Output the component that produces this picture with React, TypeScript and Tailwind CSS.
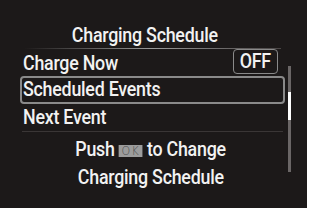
import React from "react";

const font = { fontFamily: '"Roboto", "Liberation Sans", sans-serif' };

function L({ children }: { children: React.ReactNode }) {
  return <span className="inline-block whitespace-nowrap origin-left scale-x-[0.85]">{children}</span>;
}
function C({ children }: { children: React.ReactNode }) {
  return <span className="inline-block whitespace-nowrap origin-center scale-x-[0.85]">{children}</span>;
}

export default function App() {
  return (
    <div className="w-[312px] h-[208px] bg-white flex font-medium" style={font}>
      <div className="w-[307px] h-[208px] bg-[#1c1919] flex text-[#f2f2f2] text-[21px] tracking-[-0.3px]">
        <div className="w-[288px] flex flex-col pl-[20px] pr-[3px] pt-[23px]">
          <div className="h-[25px] leading-[25px] text-center pr-[16px]"><C>Charging Schedule</C></div>
          <div className="h-px bg-gradient-to-r from-transparent via-[#9a9a9a] to-[#4a4646] mx-[4px]" />
          <div className="h-[27px] flex items-center justify-between pl-[3px] pr-[7px]">
            <span className="leading-[26px]"><L>Charge Now</L></span>
            <span className="h-[25px] w-[45px] border border-[#8a8a8a] rounded-[4px] flex items-center justify-center leading-none self-start"><C>OFF</C></span>
          </div>
          <div className="h-[28px] border-2 border-[#8a8a8a] rounded-[4px] flex items-center pl-[1px]"><L>Scheduled Events</L></div>
          <div className="h-[27px] flex items-center pl-[3px]"><L>Next Event</L></div>
          <div className="h-px bg-[#3a3636] mx-[2px]" />
          <div className="flex flex-col items-center pt-[3px] pr-[4px] leading-[28px]">
            <C>
              Push
              <span className="inline-flex align-[1px] mx-[5px] w-[28px] h-[12px] bg-[#9c9c9c] text-[#4c4c4c] text-[13px] leading-none items-center justify-center tracking-[1.5px] font-light" style={{ fontFamily: '"DejaVu Sans", sans-serif' }}>OK</span>
              to Change
            </C>
            <div><C>Charging Schedule</C></div>
          </div>
        </div>
        <div className="relative w-[3px] h-[106px] mt-[66px] bg-[#6a6666]">
          <div className="absolute left-0 top-[26px] w-[3px] h-[28px] bg-white" />
        </div>
      </div>
    </div>
  );
}
